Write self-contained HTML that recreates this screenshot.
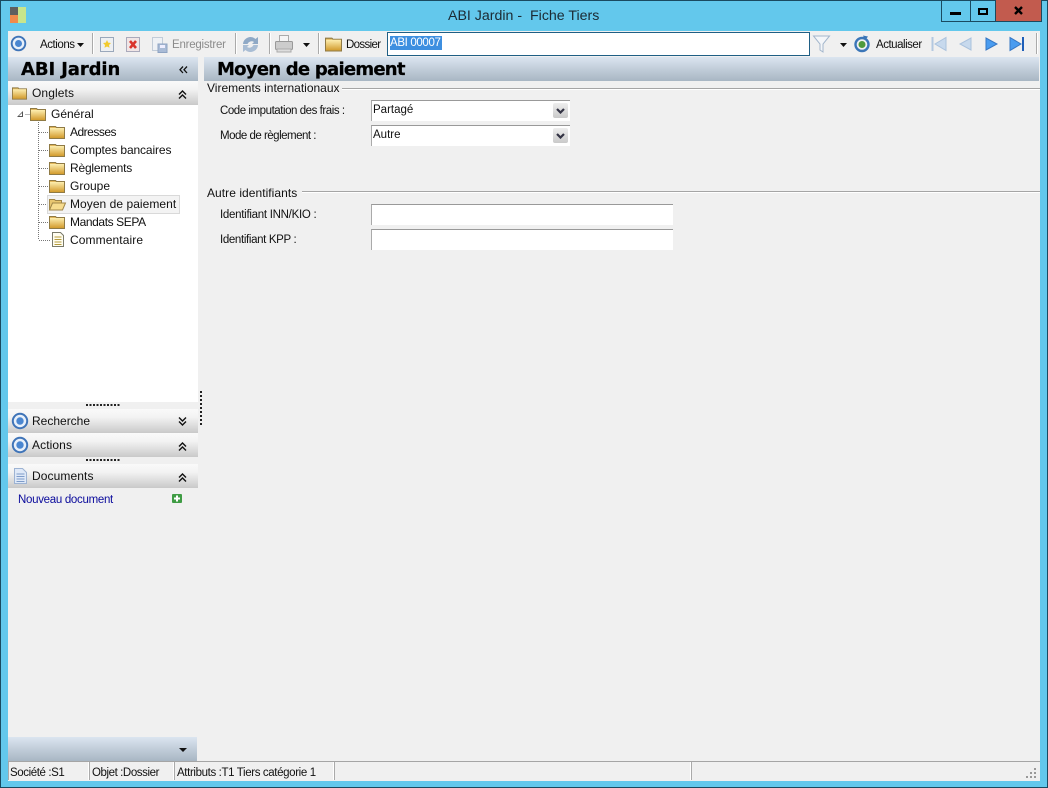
<!DOCTYPE html>
<html><head><meta charset="utf-8"><style>
html,body{margin:0;padding:0}
body{width:1048px;height:788px;position:relative;overflow:hidden;background:#63c8ec;font-family:"Liberation Sans",sans-serif;font-size:12px;color:#111}
.a,.t{position:absolute}
.t{white-space:nowrap;line-height:14px}
.n{font-size:11.5px}
.hb{background:linear-gradient(#dbe5f0,#a8b6c3)}
.hg{background:linear-gradient(#fafafa,#f2f2f2 35%,#c9c9c9)}
.h{font-family:"DejaVu Sans",sans-serif;font-weight:bold;font-size:18px;line-height:24px;color:#000;-webkit-text-stroke:.25px #000}
.sep{position:absolute;top:33px;width:1px;height:21px;background:#aaa;border-right:1px solid #fff}
.inp{position:absolute;background:#fff;border-top:1px solid #999;border-left:1px solid #aaa;box-sizing:border-box}
.ln{position:absolute;height:1px;background:#a5a5a5;border-bottom:1px solid #fff}
.dd{position:absolute;width:15px;height:15px;background:linear-gradient(#eee,#c9c9c9);border-radius:2px}
.sb{position:absolute;top:762px;height:18px;border-left:1px solid #aaa;border-right:1px solid #fff;box-sizing:border-box}
svg{position:absolute;overflow:visible}
</style></head><body>
<svg width="0" height="0" style="position:absolute"><defs>
<linearGradient id="fg" x1="0" y1="0" x2="0" y2="1"><stop offset="0" stop-color="#fdeeb0"/><stop offset="1" stop-color="#d39c2e"/></linearGradient>
<symbol id="f" viewBox="0 0 16 14"><path d="M.5 2.500V1.500h6l1 1h8v11H.5z" fill="#e2b75b" stroke="#8f7a45"/><rect x="1" y="3" width="14" height="10" fill="url(#fg)"/></symbol>
<symbol id="o" viewBox="0 0 18 18"><circle cx="9" cy="9" r="7.200" fill="#e8f0fa" stroke="#3f74b8" stroke-width="2"/><circle cx="9" cy="9" r="3.700" fill="#4a86d0"/></symbol>
<symbol id="uu" viewBox="0 0 9 9"><path d="M1 4.500L4.500 1 8 4.500M1 8.500L4.500 5 8 8.500" fill="none" stroke="#111" stroke-width="1.400"/></symbol>
<symbol id="dn" viewBox="0 0 9 9"><path d="M1 .5L4.500 4 8 .5M1 4.500L4.500 8 8 4.500" fill="none" stroke="#111" stroke-width="1.400"/></symbol>
<symbol id="v" viewBox="0 0 9 6"><path d="M1 1l3.500 3.500L8 1" fill="none" stroke="#334" stroke-width="2.200"/></symbol>
</defs></svg>

<!-- window frame -->
<div class="a" style="left:0;top:0;width:1048px;height:1px;background:#1a4a60"></div>
<div class="a" style="left:0;top:0;width:1px;height:788px;background:#1a4a60"></div>
<div class="a" style="right:0;top:0;width:1px;height:788px;background:#1a4a60"></div>
<div class="a" style="left:0;bottom:0;width:1048px;height:1px;background:#1a4a60"></div>
<div class="a" style="left:8px;top:31px;width:1032px;height:750px;background:#f0f0f0"></div>

<!-- title -->
<div class="a" style="left:10px;top:7px;width:8px;height:8px;background:#5f5f5f"></div>
<div class="a" style="left:10px;top:15px;width:8px;height:8px;background:#f08a4b"></div>
<div class="a" style="left:18px;top:7px;width:8px;height:16px;background:#c8e58c"></div>
<div class="t" style="left:448px;top:8px;font-size:14.2px;line-height:17px;color:#1b2a33;white-space:pre">ABI Jardin -  Fiche Tiers</div>
<div class="a" style="left:941px;top:0;width:28px;height:21px;border:1px solid #1a4a60;border-top:0"></div>
<div class="a" style="left:950px;top:12px;width:11px;height:3px;background:#000"></div>
<div class="a" style="left:970px;top:0;width:25px;height:21px;border-right:1px solid #1a4a60;border-bottom:1px solid #1a4a60"></div>
<div class="a" style="left:978px;top:8px;width:6px;height:3px;border:2px solid #000"></div>
<div class="a" style="left:996px;top:0;width:45px;height:21px;background:#c25b4e;border-right:1px solid #1a4a60;border-bottom:1px solid #1a4a60"></div>
<svg style="left:1014px;top:6px" width="10" height="9"><path d="M1 1l7 7M8 1L1 8" stroke="#000" stroke-width="2.400"/></svg>

<!-- toolbar -->
<svg style="left:10px;top:35px" width="17" height="17"><use href="#o" width="17" height="17"/></svg>
<div class="t n" style="left:40px;top:38px;letter-spacing:-.45px">Actions</div>
<svg style="left:77px;top:43px" width="7" height="4"><path d="M0 0h7L3.500 4z" fill="#111"/></svg>
<div class="sep" style="left:92px"></div>
<svg style="left:100px;top:37px" width="14" height="15"><rect x=".5" y=".5" width="13" height="14" fill="#eef0f2" stroke="#9aa8bb"/><path d="M7 3l1.200 2.600L11 6 9 8l.5 2.800L7 9.500 4.500 10.800 5 8 3 6l2.800-.4z" fill="#f2cb2e"/></svg>
<svg style="left:126px;top:37px" width="14" height="15"><rect x=".5" y=".5" width="13" height="14" fill="#f1e6e6" stroke="#aab"/><path d="M4 4l6 7M10 4l-6 7" stroke="#d9342c" stroke-width="2.600"/></svg>
<svg style="left:152px;top:37px" width="16" height="16"><rect x=".5" y=".5" width="10" height="13" fill="#eef1f5" stroke="#c2ccd8"/><rect x="6" y="7" width="9" height="8.500" fill="#a9bbd6" stroke="#8ea3c2"/><rect x="8" y="8" width="5" height="3" fill="#eef"/></svg>
<div class="t n" style="left:172px;top:38px;color:#8b8b8b;letter-spacing:-.23px">Enregistrer</div>
<div class="sep" style="left:235px"></div>
<svg style="left:242px;top:35px" width="17" height="18"><path d="M1 9a7.500 7.500 0 0 1 12.500-5L16 2v7h-6l2-2A4.500 4.500 0 0 0 5.500 9z" fill="#8fa9c6"/><path d="M16 10a7.500 7.500 0 0 1-12.500 5L1 17v-7h6l-2 2A4.500 4.500 0 0 0 11.500 10z" fill="#a9bdd4"/></svg>
<div class="sep" style="left:269px"></div>
<svg style="left:275px;top:35px" width="18" height="18"><rect x="4.500" y=".5" width="9" height="6" fill="#f5f5f5" stroke="#aaa"/><rect x=".5" y="6.500" width="17" height="8" rx="1" fill="#ccc" stroke="#999"/><rect x="2" y="14" width="14" height="3" fill="#ddd" stroke="#aaa"/></svg>
<svg style="left:303px;top:43px" width="7" height="4"><path d="M0 0h7L3.500 4z" fill="#111"/></svg>
<div class="sep" style="left:318px"></div>
<svg style="left:325px;top:36px" width="17" height="16"><use href="#f" width="17" height="16"/></svg>
<div class="t n" style="left:346px;top:38px;letter-spacing:-.65px">Dossier</div>
<div class="a" style="left:387px;top:32px;width:423px;height:24px;box-sizing:border-box;background:#fff;border:1px solid #1f5f85"></div>
<div class="t n" style="left:390px;top:36px;background:#3d8fe0;color:#fff;width:52px;height:14px;overflow:hidden;letter-spacing:-.35px">ABI 00007</div>
<svg style="left:813px;top:35px" width="17" height="18"><path d="M.5 1h16L10 9v8l-3-2V9z" fill="#f4f6f9" stroke="#a3b6cc"/></svg>
<svg style="left:840px;top:43px" width="7" height="4"><path d="M0 0h7L3.500 4z" fill="#111"/></svg>
<svg style="left:853px;top:35px" width="18" height="18"><circle cx="9" cy="9.500" r="6.500" fill="none" stroke="#3b76b8" stroke-width="2.400"/><circle cx="9" cy="9.500" r="3.500" fill="#4f9a3c"/><path d="M10 .5l5 1-3 4z" fill="#3b76b8"/></svg>
<div class="t n" style="left:876px;top:38px;letter-spacing:-.48px">Actualiser</div>
<svg style="left:931px;top:36px" width="16" height="16"><path d="M1.500 1v14" stroke="#b3c8e0" stroke-width="2"/><path d="M15 1.500v13L4 8z" fill="#c7d9ed" stroke="#aac2dd"/></svg>
<svg style="left:959px;top:37px" width="13" height="14"><path d="M12 1v12L1 7z" fill="#c7d9ed" stroke="#aac2dd"/></svg>
<svg style="left:985px;top:37px" width="13" height="14"><path d="M1 1v12l11-6z" fill="#4a9cf0" stroke="#3677c4"/></svg>
<svg style="left:1009px;top:36px" width="16" height="16"><path d="M1 1.500v13L12 8z" fill="#4a9cf0" stroke="#3677c4"/><path d="M14 1v14" stroke="#1f5fb8" stroke-width="2"/></svg>
<div class="sep" style="left:1036px"></div>

<!-- header bars -->
<div class="a hb" style="left:8px;top:57px;width:190px;height:24px"></div>
<div class="a h" style="left:21px;top:58px;letter-spacing:-.1px">ABI Jardin</div>
<svg style="left:179px;top:66px" width="9" height="8"><path d="M4 .5L1 3.700 4 7M8 .5L5 3.700 8 7" fill="none" stroke="#111" stroke-width="1.300"/></svg>
<div class="a hb" style="left:204px;top:57px;width:835px;height:24px"></div>
<div class="a h" style="left:217px;top:58px;letter-spacing:-.75px">Moyen de paiement</div>

<!-- left panel -->
<div class="a hg" style="left:8px;top:81px;width:190px;height:24px"></div>
<svg style="left:12px;top:86px" width="15" height="14"><use href="#f" width="15" height="14"/></svg>
<div class="t" style="left:32px;top:86px;letter-spacing:.1px">Onglets</div>
<svg style="left:178px;top:90px" width="9" height="9"><use href="#uu" width="9" height="9"/></svg>
<div class="a" style="left:8px;top:105px;width:190px;height:297px;background:#fff"></div>

<!-- tree -->
<svg style="left:16px;top:110px" width="9" height="9"><path d="M7 1v6H1z" fill="#555"/><path d="M6 3v3H3z" fill="#fff"/></svg>
<svg style="left:0;top:0" width="200" height="260"><path d="M25.500 114.500h5M38.500 122v118M39 132.500h9M39 150.500h9M39 168.500h9M39 186.500h9M39 204.500h9M39 222.500h9M39 240.500h12" stroke="#777" stroke-dasharray="1 1" fill="none"/></svg>
<svg style="left:30px;top:107px" width="16" height="14"><use href="#f" width="16" height="14"/></svg>
<div class="t" style="left:51px;top:107px">Général</div>
<svg style="left:49px;top:125px" width="16" height="14"><use href="#f" width="16" height="14"/></svg>
<div class="t" style="left:70px;top:125px;letter-spacing:-.5px">Adresses</div>
<svg style="left:49px;top:143px" width="16" height="14"><use href="#f" width="16" height="14"/></svg>
<div class="t" style="left:70px;top:143px;letter-spacing:-.12px">Comptes bancaires</div>
<svg style="left:49px;top:161px" width="16" height="14"><use href="#f" width="16" height="14"/></svg>
<div class="t" style="left:70px;top:161px;letter-spacing:-.2px">Règlements</div>
<svg style="left:49px;top:179px" width="16" height="14"><use href="#f" width="16" height="14"/></svg>
<div class="t" style="left:70px;top:179px">Groupe</div>
<div class="a" style="left:47px;top:195px;width:131px;height:17px;background:#f3f3f3;border:1px solid #d9d9d9"></div>
<svg style="left:49px;top:197px" width="17" height="14"><path d="M.5 13V2.500h5l1 1h6v2.500" fill="#e8c670" stroke="#a08648"/><path d="M.5 13l3-7h13l-3 7z" fill="#f7dc8e" stroke="#a08648"/></svg>
<div class="t" style="left:70px;top:197px;letter-spacing:.05px">Moyen de paiement</div>
<svg style="left:49px;top:215px" width="16" height="14"><use href="#f" width="16" height="14"/></svg>
<div class="t" style="left:70px;top:215px;letter-spacing:-.4px">Mandats SEPA</div>
<svg style="left:52px;top:232px" width="12" height="15"><path d="M.5.500h8l3 3v11H.5z" fill="#fffdf0" stroke="#7a7a6a"/><path d="M2.500 5h7M2.500 7.500h7M2.500 10h7M2.500 12.500h7" stroke="#b49a3c"/></svg>
<div class="t" style="left:70px;top:233px;letter-spacing:.1px">Commentaire</div>

<!-- grips -->
<svg style="left:0;top:0" width="210" height="470"><path d="M86 405h34M86 460h34" stroke="#222" stroke-width="2" stroke-dasharray="2 1.500" fill="none"/><path d="M201 391v36" stroke="#222" stroke-width="2" stroke-dasharray="2 2" fill="none"/></svg>

<div class="a hg" style="left:8px;top:409px;width:190px;height:24px"></div>
<svg style="left:11px;top:412px" width="18" height="18"><use href="#o" width="18" height="18"/></svg>
<div class="t" style="left:32px;top:414px">Recherche</div>
<svg style="left:178px;top:417px" width="9" height="9"><use href="#dn" width="9" height="9"/></svg>

<div class="a hg" style="left:8px;top:433px;width:190px;height:24px"></div>
<svg style="left:11px;top:436px" width="18" height="18"><use href="#o" width="18" height="18"/></svg>
<div class="t" style="left:32px;top:438px;letter-spacing:.1px">Actions</div>
<svg style="left:178px;top:442px" width="9" height="9"><use href="#uu" width="9" height="9"/></svg>

<div class="a hg" style="left:8px;top:464px;width:190px;height:24px"></div>
<svg style="left:14px;top:468px" width="13" height="16"><path d="M.5.500h8l4 4v11H.5z" fill="#dfe9f8" stroke="#9db3d3"/><path d="M2.500 6h8M2.500 8.500h8M2.500 11h8M2.500 13.500h8" stroke="#7d9bc9"/></svg>
<div class="t" style="left:32px;top:469px;letter-spacing:.1px">Documents</div>
<svg style="left:178px;top:473px" width="9" height="9"><use href="#uu" width="9" height="9"/></svg>
<div class="t n" style="left:18px;top:493px;color:#0b0b9c;letter-spacing:-.3px">Nouveau document</div>
<div class="a" style="left:172px;top:494px;width:10px;height:9px;background:#3f9c44;border-radius:1px"></div>
<svg style="left:172px;top:494px" width="10" height="9"><path d="M5 1.500v6M2 4.500h6" stroke="#fff" stroke-width="2"/></svg>

<div class="a hb" style="left:8px;top:737px;width:189px;height:24px"></div>
<svg style="left:179px;top:748px" width="8" height="4"><path d="M0 0h8L4 4z" fill="#111"/></svg>

<!-- form -->
<div class="t" style="left:207px;top:81px">Virements internationaux</div>
<div class="ln" style="left:342px;top:88px;width:698px"></div>
<div class="t n" style="left:220px;top:104px;letter-spacing:-.45px">Code imputation des frais :</div>
<div class="inp" style="left:371px;top:100px;width:199px;height:21px"></div>
<div class="t n" style="left:373px;top:103px">Partagé</div>
<div class="dd" style="left:553px;top:103px"></div>
<svg style="left:556px;top:108px" width="9" height="6"><use href="#v" width="9" height="6"/></svg>
<div class="t n" style="left:220px;top:129px;letter-spacing:-.5px">Mode de règlement :</div>
<div class="inp" style="left:371px;top:125px;width:199px;height:21px"></div>
<div class="t n" style="left:373px;top:128px">Autre</div>
<div class="dd" style="left:553px;top:128px"></div>
<svg style="left:556px;top:133px" width="9" height="6"><use href="#v" width="9" height="6"/></svg>

<div class="t" style="left:207px;top:186px;letter-spacing:.05px">Autre identifiants</div>
<div class="ln" style="left:302px;top:191px;width:738px"></div>
<div class="t n" style="left:220px;top:208px;letter-spacing:-.28px">Identifiant INN/KIO :</div>
<div class="inp" style="left:371px;top:204px;width:302px;height:21px"></div>
<div class="t n" style="left:220px;top:233px;letter-spacing:-.35px">Identifiant KPP :</div>
<div class="inp" style="left:371px;top:229px;width:302px;height:21px"></div>

<!-- status bar -->
<div class="a" style="left:8px;top:761px;width:1032px;height:1px;background:#a5a5a5"></div>
<div class="sb" style="left:8px;width:81px"></div>
<div class="t n" style="left:10px;top:766px;letter-spacing:-.4px">Société :S1</div>
<div class="sb" style="left:89px;width:85px"></div>
<div class="t n" style="left:92px;top:766px;letter-spacing:-.42px">Objet :Dossier</div>
<div class="sb" style="left:174px;width:160px"></div>
<div class="t n" style="left:177px;top:766px;letter-spacing:-.37px">Attributs :T1 Tiers catégorie 1</div>
<div class="sb" style="left:334px;width:357px"></div>
<div class="sb" style="left:691px;width:349px;border-right:0"></div>
<svg style="left:1025px;top:767px" width="12" height="12"><path d="M9 1h2v2H9zM9 5h2v2H9zM5 5h2v2H5zM9 9h2v2H9zM5 9h2v2H5zM1 9h2v2H1z" fill="#999"/></svg>
</body></html>
